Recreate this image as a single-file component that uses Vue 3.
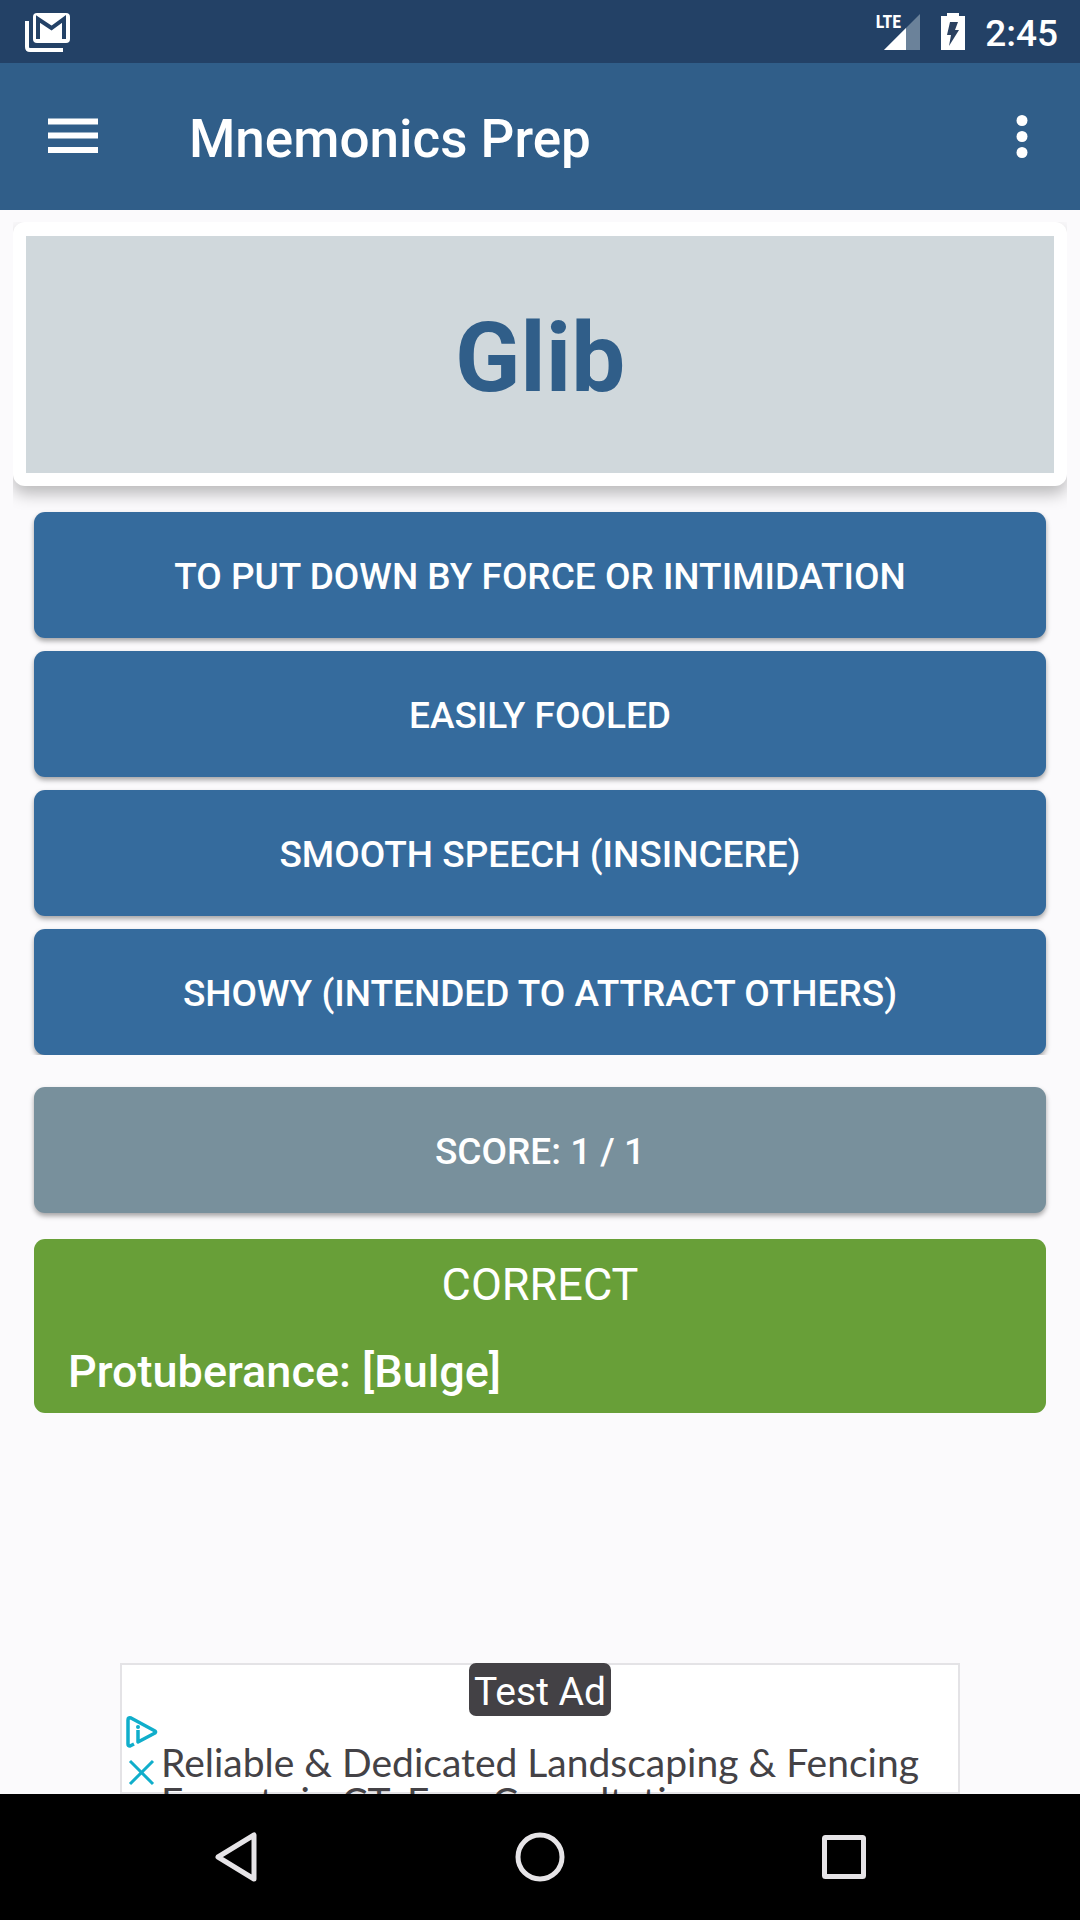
<template>
  <div class="screen">
    <!-- Android status bar -->
    <div class="status-bar">
      <svg class="mail-icon" viewBox="0 0 48 42" width="48" height="42">
        <path d="M2 10V36Q2 39 5 39H38" fill="none" stroke="#fff" stroke-width="4" />
        <rect x="8" y="2" width="37" height="30" rx="4" fill="#fff" />
        <path d="M13 28V8L26.500 17L39 8V28" fill="none" stroke="#234166" stroke-width="4" />
      </svg>

      <div class="status-right">
        <div class="signal">
          <span class="lte">LTE</span>
          <svg viewBox="0 0 38 38" width="38" height="38">
            <path d="M37 1V37H1Z" fill="#6b829a" />
            <path d="M23 15V37H1Z" fill="#fff" />
          </svg>
        </div>
        <svg viewBox="0 0 24 38" width="24" height="38">
          <path d="M6 0H18V3H24V37H0V3H6Z" fill="#fff" />
          <path d="M9 9H17L14 17H18L8 33L10 22H6Z" fill="#2b4160" />
        </svg>
        <span class="time">2:45</span>
      </div>
    </div>

    <!-- App bar -->
    <header class="app-bar">
      <button class="icon-button" aria-label="Open menu">
        <svg viewBox="0 0 50 38" width="50" height="38">
          <path d="M0 3.500H50M0 17.500H50M0 32H50" stroke="#fff" stroke-width="6" />
        </svg>
      </button>
      <h1>Mnemonics Prep</h1>
      <button class="icon-button" aria-label="More options">
        <svg viewBox="0 0 12 44" width="12" height="44">
          <circle cx="6" cy="5.500" r="5.500" fill="#fff" />
          <circle cx="6" cy="21.500" r="5.500" fill="#fff" />
          <circle cx="6" cy="37.500" r="5.500" fill="#fff" />
        </svg>
      </button>
    </header>

    <main>
      <div class="word-card">
        <h2>{{ word }}</h2>
      </div>

      <div class="quiz">
        <div class="answers">
          <button
            v-for="answer in answers"
            :key="answer"
            class="bar-button"
            @click="pick(answer)"
          >
            {{ answer }}
          </button>
        </div>

        <button class="bar-button score">Score: {{ score }} / {{ total }}</button>

        <div class="result" :class="{ wrong: !isCorrect }">
          <p class="verdict">{{ isCorrect ? 'CORRECT' : 'WRONG' }}</p>
          <p class="hint">Protuberance: [Bulge]</p>
        </div>
      </div>
    </main>

    <!-- Banner ad, its lower half runs under the navigation bar -->
    <aside class="ad">
      <span class="ad-label">Test Ad</span>
      <div class="ad-body">
        <div class="ad-icons">
          <svg viewBox="0 0 32 32" width="32" height="32">
            <path
              d="M8 28L4 30Q2 30 2 28V4Q2 1 5 2L29 15Q30 16 29 17L12 26V14"
              fill="none"
              stroke="#10aecb"
              stroke-width="3.500"
              stroke-linejoin="round"
            />
            <circle cx="12" cy="11" r="2" fill="#10aecb" />
          </svg>
          <svg viewBox="0 0 32 32" width="32" height="32">
            <path d="M4 5L27 28M27 5L4 28" stroke="#10aecb" stroke-width="3" />
          </svg>
        </div>
        <p>Reliable &amp; Dedicated Landscaping &amp; Fencing Experts in CT. Free Consultation</p>
      </div>
    </aside>

    <!-- Android navigation bar -->
    <nav class="nav-bar">
      <button aria-label="Back">
        <svg viewBox="0 0 50 50" width="50" height="50">
          <path d="M43 3V47L7 25Z" />
        </svg>
      </button>
      <button aria-label="Home">
        <svg viewBox="0 0 50 50" width="50" height="50">
          <circle cx="25" cy="25" r="22" />
        </svg>
      </button>
      <button aria-label="Recent apps">
        <svg viewBox="0 0 50 50" width="50" height="50">
          <rect x="5.500" y="5.500" width="39" height="39" rx="1" />
        </svg>
      </button>
    </nav>
  </div>
</template>

<script setup>
import { ref } from 'vue'

const word = 'Glib'
const correctAnswer = 'Smooth speech (insincere)'
const answers = [
  'To put down by force or intimidation',
  'Easily fooled',
  correctAnswer,
  'Showy (intended to attract others)'
]

const score = ref(1)
const total = ref(1)
const isCorrect = ref(true)

function pick(answer) {
  isCorrect.value = answer === correctAnswer
  total.value++
  if (isCorrect.value) {
    score.value++
  }
}
</script>

<style>
body {
  margin: 0;
  background-color: #fbfafc;
}
</style>

<style scoped>
.screen {
  display: flex;
  flex-direction: column;
  min-height: 100vh;
  font-family: Roboto, "Liberation Sans", sans-serif;
  color: white;
}
h1,
h2,
p {
  margin: 0;
}
button {
  padding: 0;
  border: none;
  background: none;
  color: inherit;
  font-family: inherit;
  cursor: pointer;
}
svg {
  display: block;
}
.status-bar {
  display: flex;
  align-items: center;
  justify-content: space-between;
  height: 63px;
  padding: 0 22px 0 25px;
  background-color: #234166;
}
.status-right {
  display: flex;
  align-items: center;
  gap: 20px;
}
.signal {
  position: relative;
}
.lte {
  position: absolute;
  right: 20px;
  top: 0;
  font-family: "Roboto Condensed", "Liberation Sans Narrow", Roboto, sans-serif;
  font-size: 18px;
  line-height: 18px;
  font-weight: bold;
}
.time {
  padding-top: 4px;
  font-size: 37px;
  line-height: 44px;
  font-weight: 500;
}
.app-bar {
  display: flex;
  align-items: center;
  height: 147px;
  padding: 0 52px 0 48px;
  background-color: #305e89;
}
.app-bar h1 {
  flex: 1;
  padding: 4px 0 0 91px;
  font-size: 53px;
  line-height: 60px;
  font-weight: 500;
}
.word-card {
  margin: 12px 13px 0;
  padding: 14px 13px 13px;
  border-radius: 12px;
  background-color: white;
  box-shadow: 0 8px 16px rgba(0, 0, 0, 0.26);
  clip-path: inset(0 0 -26px 0);
}
.word-card h2 {
  padding: 64px 0 56px;
  background-color: #d0d8dc;
  color: #305e89;
  font-size: 96px;
  line-height: 117px;
  font-weight: bold;
  text-align: center;
}
.quiz {
  position: relative;
  padding: 26px 34px;
}
.answers {
  display: flex;
  flex-direction: column;
  gap: 13px;
  clip-path: inset(-4px -8px 0 -8px);
}
.bar-button {
  width: 100%;
  height: 126px;
  padding-top: 4px;
  border-radius: 11px;
  background-color: #356b9d;
  box-shadow: 0 3px 5px rgba(0, 0, 0, 0.35);
  font-size: 37px;
  line-height: 44px;
  font-weight: 500;
  text-transform: uppercase;
}
.score {
  margin-top: 32px;
  background-color: #78909c;
}
.result {
  margin-top: 26px;
  padding: 16px 34px 11px;
  border-radius: 11px;
  background-color: #689f38;
  font-size: 45px;
  line-height: 60px;
}
.result.wrong {
  background-color: #d32f2f;
}
.verdict {
  text-align: center;
}
.hint {
  margin-top: 27px;
  font-weight: 500;
}
.ad {
  display: flex;
  flex-direction: column;
  align-items: center;
  box-sizing: border-box;
  width: 840px;
  max-width: 100%;
  height: 131px;
  margin: auto auto 0;
  border: 2px solid #e4e3e6;
  background-color: white;
}
.ad-label {
  margin-top: -2px;
  padding: 5px 5px 0;
  border-radius: 7px;
  background-color: #434145;
  font-size: 39px;
  line-height: 48px;
}
.ad-body {
  display: flex;
  align-self: stretch;
  gap: 3px;
  padding: 0 6px 0 4px;
}
.ad-icons {
  display: flex;
  flex-direction: column;
  gap: 8px;
}
.ad-body p {
  padding-top: 27px;
  color: #444246;
  font-family: Lato, sans-serif;
  font-size: 39px;
  line-height: 39px;
}
.nav-bar {
  position: relative;
  display: flex;
  height: 126px;
  padding: 0 84px;
  background-color: black;
}
.nav-bar button {
  flex: 1;
  display: flex;
  align-items: center;
  justify-content: center;
}
.nav-bar svg {
  fill: none;
  stroke: #e6e4e7;
  stroke-width: 5;
  stroke-linejoin: round;
}
</style>
